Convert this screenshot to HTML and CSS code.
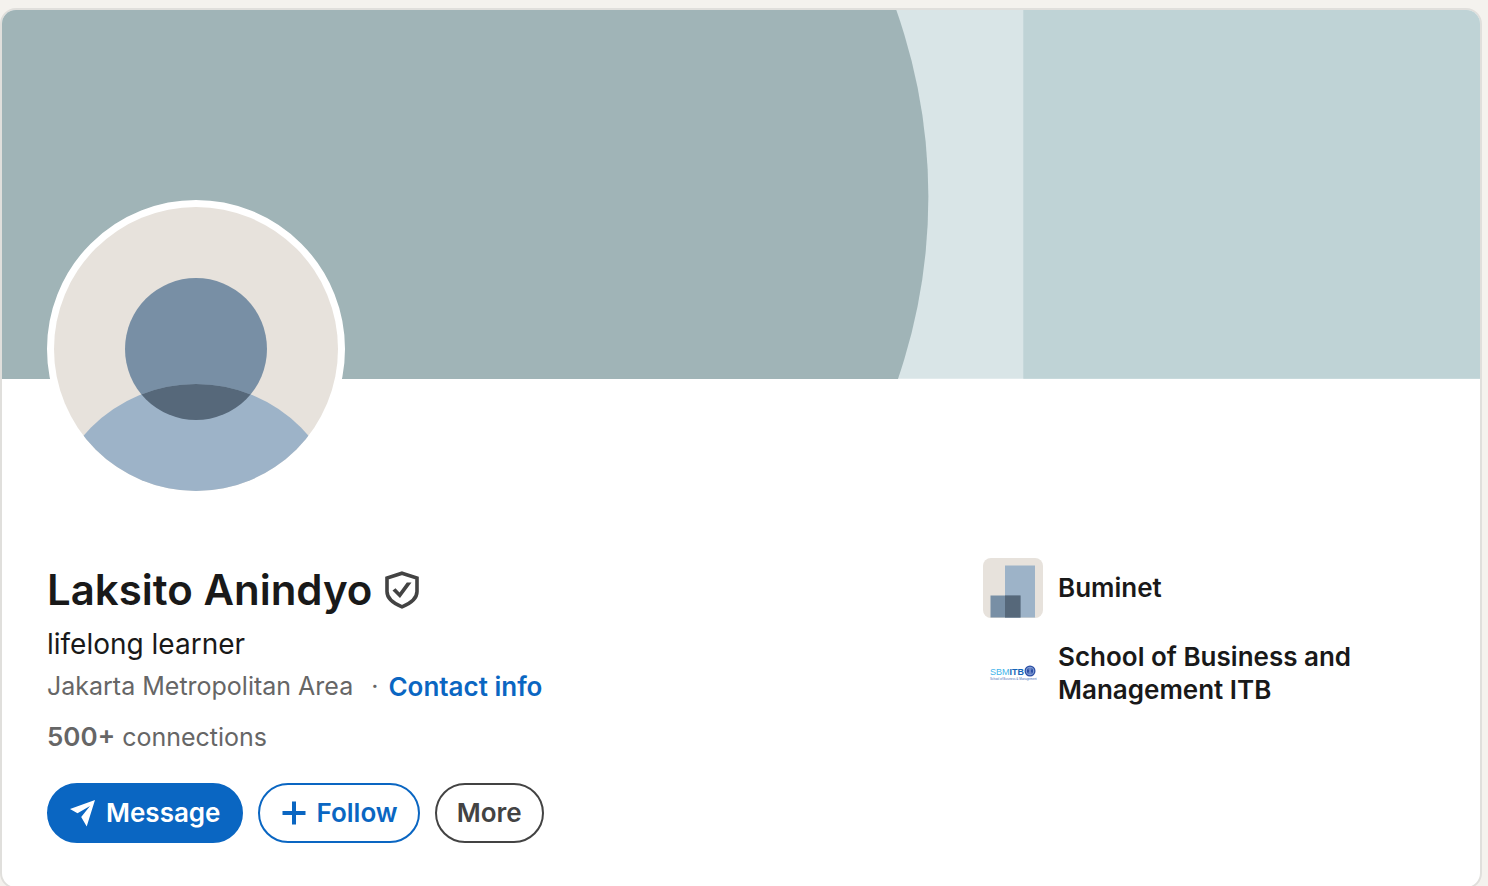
FILE: index.html
```html
<!DOCTYPE html>
<html lang="en">

<head>
	<meta charset="UTF-8">
	<meta name="viewport" content="width=device-width, initial-scale=1.0">
	<title>Laksito Anindyo</title>
	<link rel="stylesheet" href="styles.css">
</head>

<body>
	<main class="card">
		<svg class="banner" viewBox="0 0 1479 369" aria-hidden="true">
			<rect width="1479" height="369" fill="#d9e5e7"/>
			<rect x="1022" width="457" height="369" fill="#bfd3d6"/>
			<circle cx="366" cy="187" r="561" fill="#a0b4b7"/>
		</svg>

		<div class="content">
			<svg class="avatar" viewBox="0 0 284 284" role="img" aria-label="Profile photo">
				<defs>
					<clipPath id="head"><circle cx="142" cy="142" r="71"/></clipPath>
				</defs>
				<rect width="284" height="284" fill="#e7e2dc"/>
				<circle cx="142" cy="142" r="71" fill="#788fa5"/>
				<circle cx="142" cy="325.5" r="148.5" fill="#9db3c8"/>
				<circle cx="142" cy="325.5" r="148.5" fill="#56687a" clip-path="url(#head)"/>
			</svg>

			<div class="details">
				<div class="info">
					<div class="name-row">
						<h1 class="name">Laksito Anindyo</h1>
						<svg class="shield" viewBox="0 0 36 38" role="img" aria-label="Verified">
							<path d="M18 2.2 33 7v13.5c0 6.500-5.500 11.500-15 15.300C8.500 32 3 27 3 20.500V7z" fill="none" stroke="#434343" stroke-width="3.600"/>
							<path d="M8.500 19.500l3-2.300 4 4.300L22.800 11.500h4.700L16 27z" fill="#434343"/>
						</svg>
					</div>
					<p class="headline">lifelong learner</p>
					<p class="location">
						<span>Jakarta Metropolitan Area</span>
						<span class="dot">·</span>
						<a href="#">Contact info</a>
					</p>
					<p class="connections"><b>500+</b> connections</p>
					<div class="actions">
						<button class="btn primary" type="button">
							<svg viewBox="0 0 28 28" aria-hidden="true">
								<path d="M26 1 1 10l7.500 4.300L21 7l-8.800 11 5.500 9.500z" fill="currentColor"/>
							</svg>
							Message
						</button>
						<button class="btn follow" type="button">
							<svg viewBox="0 0 28 28" aria-hidden="true">
								<path d="M14 2.500v23M2.500 14h23" stroke="currentColor" stroke-width="4"/>
							</svg>
							Follow
						</button>
						<button class="btn" type="button">More</button>
					</div>
				</div>

				<ul class="orgs">
					<li>
						<svg class="logo" viewBox="0 0 60 60" aria-hidden="true">
							<rect width="60" height="60" fill="#e7e2dc"/>
							<path d="M22 7.500h30v52H22z" fill="#9db3c8"/>
							<path d="M7.500 37.500h30v22h-30z" fill="#788fa5"/>
							<path d="M22 37.500h15.500v22H22z" fill="#56687a"/>
						</svg>
						<span>Buminet</span>
					</li>
					<li>
						<svg class="logo" viewBox="0 0 60 60" aria-hidden="true">
							<text class="logo-text" x="7" y="32" fill="#3fb4ea">SBM<tspan class="logo-itb" fill="#1565b8">ITB</tspan></text>
							<circle cx="47" cy="28" r="5.500" fill="#2c4fa5"/>
							<circle cx="47" cy="28" r="3.800" fill="none" stroke="#8fa9dc"/>
							<path d="M45.500 26h3M46 28h2M45.500 30h3" stroke="#a9bde6"/>
							<text class="logo-sub" x="7" y="37" fill="#4a72b8">School of Business &amp; Management</text>
						</svg>
						<span>School of Business and Management ITB</span>
					</li>
				</ul>
			</div>
		</div>
	</main>
</body>

</html>
```

FILE: styles.css
```css
*,
*::after,
*::before {
	box-sizing: border-box;
}

body {
	margin: 0;
	padding: 8px 6px 0 0;
	background-color: #f4f2ee;
	color: #191919;
	font-family: Inter, "Liberation Sans", sans-serif;
	font-size: 26px;
	line-height: 33px;
}

h1,
p,
ul {
	margin: 0;
	padding: 0;
}

.card {
	overflow: hidden;
	background-color: #fff;
	border: 2px solid #e0dfdc;
	border-radius: 16px;
}

.banner {
	display: block;
	width: 100%;
}

.content {
	padding: 0 45px 44px;
}

/* overlaps the banner */
.avatar {
	display: block;
	position: relative;
	width: 298px;
	height: 298px;
	margin-top: -179px;
	border: 7px solid #fff;
	border-radius: 50%;
	background-color: #fff;
}

.details {
	display: grid;
	grid-template-columns: 2fr 1fr;
	gap: 32px;
	padding-top: 60px;
}

.name-row {
	display: flex;
	align-items: center;
	gap: 12px;
	padding-top: 4px;
}

.name {
	font-size: 42px;
	line-height: 56px;
	font-weight: 600;
}

.shield {
	width: 36px;
	height: 38px;
}

.headline {
	margin-top: 6px;
	font-size: 28px;
	line-height: 40px;
}

.location,
.connections {
	color: #666;
	font-size: 25px;
}

.location {
	display: flex;
	gap: 10px;
	margin-top: 6px;
}

.location .dot {
	margin-left: 8px;
}

.location a {
	color: #0a66c2;
	font-size: 26px;
	font-weight: 600;
	text-decoration: none;
}

.connections {
	margin-top: 17px;
}

.connections b {
	font-size: 26px;
	font-weight: 600;
}

.actions {
	display: flex;
	gap: 15px;
	margin-top: 29px;
}

.btn {
	display: flex;
	align-items: center;
	gap: 9px;
	height: 60px;
	padding: 0 20px;
	border: 2px solid #434343;
	border-radius: 30px;
	background-color: #fff;
	color: #434343;
	font: inherit;
	font-weight: 600;
	cursor: pointer;
}

.btn svg {
	width: 28px;
	height: 28px;
}

.btn.primary {
	border-color: #0a66c2;
	background-color: #0a66c2;
	color: #fff;
}

.btn.follow {
	border-color: #0a66c2;
	color: #0a66c2;
}

.orgs {
	display: flex;
	flex-direction: column;
	gap: 22px;
	list-style: none;
	font-weight: 600;
}

.orgs li {
	display: flex;
	align-items: center;
	gap: 15px;
}

.orgs span {
	max-width: 320px;
}

.logo {
	flex: none;
	width: 60px;
	height: 60px;
	border-radius: 8px;
}

.logo-text {
	font-family: "Liberation Sans", sans-serif;
	font-size: 9px;
	font-weight: 400;
}

.logo-itb {
	font-weight: 700;
}

.logo-sub {
	font-family: "Liberation Sans", sans-serif;
	font-size: 3px;
	font-weight: 400;
}
```
